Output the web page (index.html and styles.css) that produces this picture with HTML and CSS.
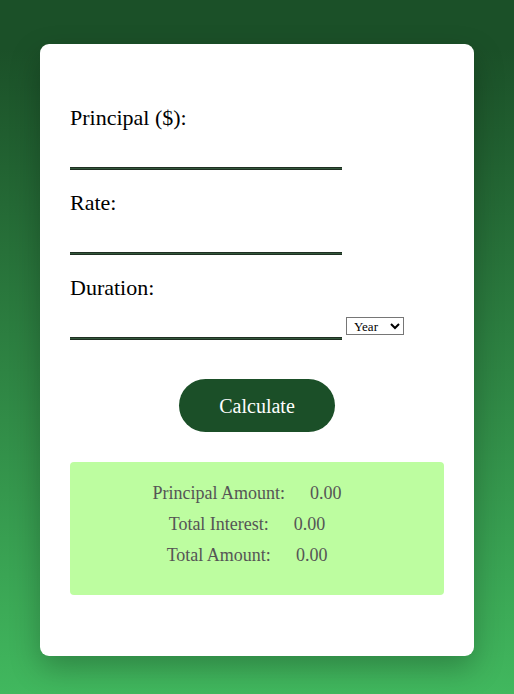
FILE: index.html
```html
<!DOCTYPE html>
<html>
<head>
<meta charset="utf-8">
<link rel="stylesheet" href="styles.css">
</head>
<body>
<div class="card">
  <form class="form">
    <label class="label" for="principal">Principal ($):</label>
    <div class="row"><input class="field" id="principal" type="text"></div>
    <label class="label" for="rate">Rate:</label>
    <div class="row"><input class="field" id="rate" type="text"></div>
    <label class="label" for="duration">Duration:</label>
    <div class="row">
      <input class="field" id="duration" type="text">
      <select class="unit"><option>Year</option><option>Month</option></select>
    </div>
    <div class="actions"><button type="button" class="btn">Calculate</button></div>
  </form>
  <div class="result">
    <div class="res-row"><span>Principal Amount:</span><span>0.00</span></div>
    <div class="res-row"><span>Total Interest:</span><span>0.00</span></div>
    <div class="res-row"><span>Total Amount:</span><span>0.00</span></div>
  </div>
</div>
</body>
</html>
```
FILE: styles.css
```css
html, body {
  margin: 0;
  padding: 0;
}
body {
  min-height: 694px;
  background: linear-gradient(to bottom, #1b5028 0%, #1b5028 7%, #41b85e 100%);
  font-family: "Liberation Serif", "Times New Roman", serif;
  overflow: hidden;
}
.card {
  box-sizing: border-box;
  width: 434px;
  margin: 44px auto 0;
  background: #fff;
  border-radius: 9px;
  padding: 61px 30px;
  box-shadow: 0 12px 30px rgba(0, 0, 0, 0.25);
}
.form {
  display: flex;
  flex-direction: column;
}
.label {
  display: block;
  font-size: 22px;
  line-height: 25px;
  color: #000;
}
.row {
  display: flex;
  align-items: flex-end;
  gap: 4px;
  margin-bottom: 22px;
}
.field {
  box-sizing: border-box;
  width: 272px;
  height: 38px;
  border: 0;
  border-bottom: 1px solid #1f2f22;
  box-shadow: 0 1px 0 #33573a, 0 2px 0 #1f2f22;
  outline: none;
  background: transparent;
  font-family: inherit;
  font-size: 20px;
  padding: 0;
}
.unit {
  font-family: "Liberation Serif", serif;
  font-size: 13px;
  height: 18px;
  width: 58px;
  margin-bottom: 3px;
  padding: 0 0 0 3px;
  background: #fff;
  border: 1px solid #767676;
  border-radius: 0;
  color: #000;
}
.actions {
  display: flex;
  justify-content: center;
  margin-top: 19px;
  margin-bottom: 30px;
}
.btn {
  width: 156px;
  height: 53px;
  border: 0;
  border-radius: 27px;
  background: #1b4f28;
  color: #fff;
  font-family: "Liberation Serif", serif;
  font-size: 20px;
  padding: 2px 0 0;
}
.result {
  background: #bdfda0;
  border-radius: 4px;
  padding: 21px 0 19px;
  color: #555;
  font-size: 18px;
}
.res-row {
  display: flex;
  justify-content: center;
  gap: 25px;
  line-height: 21px;
  margin-bottom: 10px;
  padding-right: 20px;
}
```
